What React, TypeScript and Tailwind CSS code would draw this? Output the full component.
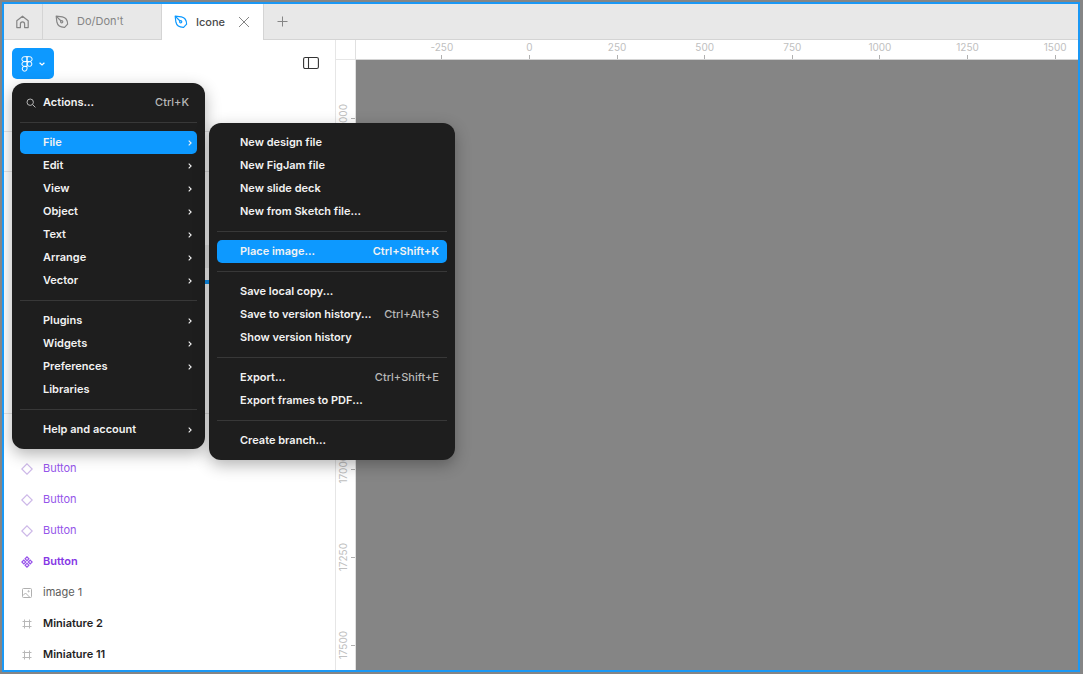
import type { ReactNode } from "react";

type MenuEntry = {
  label: string;
  shortcut?: string;
  submenu?: boolean;
  active?: boolean;
  icon?: ReactNode;
};

type Layer = {
  name: string;
  kind: "instance" | "component" | "image" | "frame";
};

const SearchIcon = () => (
  <svg width="10" height="10" viewBox="0 0 10 10" fill="none" stroke="currentColor" aria-hidden="true">
    <circle cx="4.2" cy="4.2" r="3.2" />
    <path d="M6.6 6.6 9.4 9.4" />
  </svg>
);

const ChevronRight = () => (
  <svg width="4" height="6" viewBox="0 0 4 6" fill="none" stroke="currentColor" strokeWidth="1.1" aria-hidden="true">
    <path d="M.7.7 3.1 3 .7 5.3" />
  </svg>
);

const mainMenu: MenuEntry[][] = [
  [{ label: "Actions...", shortcut: "Ctrl+K", icon: <SearchIcon /> }],
  [
    { label: "File", submenu: true, active: true },
    { label: "Edit", submenu: true },
    { label: "View", submenu: true },
    { label: "Object", submenu: true },
    { label: "Text", submenu: true },
    { label: "Arrange", submenu: true },
    { label: "Vector", submenu: true },
  ],
  [
    { label: "Plugins", submenu: true },
    { label: "Widgets", submenu: true },
    { label: "Preferences", submenu: true },
    { label: "Libraries" },
  ],
  [{ label: "Help and account", submenu: true }],
];

const fileMenu: MenuEntry[][] = [
  [
    { label: "New design file" },
    { label: "New FigJam file" },
    { label: "New slide deck" },
    { label: "New from Sketch file..." },
  ],
  [{ label: "Place image...", shortcut: "Ctrl+Shift+K", active: true }],
  [
    { label: "Save local copy..." },
    { label: "Save to version history...", shortcut: "Ctrl+Alt+S" },
    { label: "Show version history" },
  ],
  [
    { label: "Export...", shortcut: "Ctrl+Shift+E" },
    { label: "Export frames to PDF..." },
  ],
  [{ label: "Create branch..." }],
];

const layers: Layer[] = [
  { name: "Button", kind: "instance" },
  { name: "Button", kind: "instance" },
  { name: "Button", kind: "instance" },
  { name: "Button", kind: "component" },
  { name: "image 1", kind: "image" },
  { name: "Miniature 2", kind: "frame" },
  { name: "Miniature 11", kind: "frame" },
];

const layerText = {
  instance: "text-[#9555ea]",
  component: "text-[#8638e5] font-semibold",
  image: "text-[#5c5c5c]",
  frame: "text-[#1e1e1e] font-semibold",
};

const xMarks = ["-250", "0", "250", "500", "750", "1000", "1250", "1500"];
const yMarks = ["16000", "16250", "16500", "16750", "17000", "17250", "17500"];

const PenIcon = () => (
  <svg width="14" height="14" viewBox="0 0 14 14" fill="none" stroke="currentColor" strokeWidth="1.2" strokeLinejoin="round" aria-hidden="true">
    <path d="M1.2 1.2 7.4 1.8C10.6 2.4 12.6 5 12.6 9.2L9.6 12.3C5.4 12.4 2.6 10.4 1.9 7.2Z" />
    <path d="M1.4 1.4 6 6" />
    <circle cx="6.7" cy="6.7" r="1.1" />
  </svg>
);

const HomeIcon = () => (
  <svg width="13" height="14" viewBox="0 0 13 14" fill="none" stroke="currentColor" strokeWidth="1.2" strokeLinejoin="round" aria-hidden="true">
    <path d="M.8 5.8 6.5 1.2 12.2 5.8V12.6H8.6V9A2.1 2.1 0 0 0 4.4 9V12.6H.8Z" />
  </svg>
);

const FigmaIcon = () => (
  <svg width="12" height="16" viewBox="0 0 12 16" fill="none" stroke="currentColor" strokeWidth="1" aria-hidden="true">
    <path d="M6 .7H3.3a2.4 2.4 0 0 0 0 4.9H6ZM6 .7h2.7a2.4 2.4 0 0 1 0 4.9H6ZM6 5.6H3.3a2.4 2.4 0 0 0 0 4.8H6Z" />
    <circle cx="8.5" cy="8" r="2.4" />
    <path d="M6 10.4H3.3A2.4 2.4 0 1 0 6 12.8Z" />
  </svg>
);

const LayerIcon = ({ kind }: { kind: Layer["kind"] }) => {
  if (kind === "instance") {
    return (
      <svg width="12" height="12" viewBox="0 0 12 12" fill="none" stroke="#cdb8e8" strokeWidth="1.2" aria-hidden="true">
        <path d="M6 .8 11.2 6 6 11.2.8 6Z" />
      </svg>
    );
  }
  if (kind === "component") {
    return (
      <svg width="12" height="12" viewBox="0 0 12 12" fill="none" stroke="#9650ea" strokeWidth="1.2" aria-hidden="true">
        <path d="M6 .9 7.9 2.8 6 4.7 4.1 2.8ZM6 7.3 7.9 9.2 6 11.1 4.1 9.2ZM2.8 4.1 4.7 6 2.8 7.9.9 6ZM9.2 4.1 11.1 6 9.2 7.9 7.3 6Z" />
      </svg>
    );
  }
  if (kind === "image") {
    return (
      <svg width="12" height="12" viewBox="0 0 12 12" fill="none" stroke="#b0b0b0" aria-hidden="true">
        <rect x="1.5" y="1.5" width="9" height="9" rx="1" />
        <path d="M2 8.5 4.5 6 8.8 10.3" />
        <circle cx="7.6" cy="4.3" r=".6" />
      </svg>
    );
  }
  return (
    <svg width="12" height="12" viewBox="0 0 12 12" fill="none" stroke="#b8b8b8" aria-hidden="true">
      <path d="M3.5 1.5V10.5M8.5 1.5V10.5M1.5 3.5H10.5M1.5 8.5H10.5" />
    </svg>
  );
};

type MenuProps = {
  label: string;
  groups: MenuEntry[][];
  className: string;
};

const Menu = ({ label, groups, className }: MenuProps) => (
  <div
    role="menu"
    aria-label={label}
    className={`rounded-xl bg-[#1e1e1e] p-2 text-[11px] font-semibold text-[#f2f2f2] shadow-[0_5px_16px_rgba(0,0,0,0.3)] ${className}`}
  >
    {groups.map((group, i) => (
      <div key={i} role="group" className={i > 0 ? "mt-2 border-t border-[#383838] pt-2" : ""}>
        {group.map((entry) => (
          <button
            key={entry.label}
            type="button"
            role="menuitem"
            className={`flex h-[23px] w-full items-center rounded-[5px] text-left whitespace-nowrap ${
              entry.submenu ? "pr-[5px]" : "pr-2"
            } ${entry.active ? "bg-[#0d99ff]" : ""}`}
          >
            <span className="flex w-[23px] shrink-0 justify-center pr-0.5 text-[#b8b8b8]">{entry.icon}</span>
            <span className="flex-1">{entry.label}</span>
            {entry.shortcut && (
              <span className={entry.active ? "" : "font-medium text-[#b8b8b8]"}>{entry.shortcut}</span>
            )}
            {entry.submenu && <ChevronRight />}
          </button>
        ))}
      </div>
    ))}
  </div>
);

const TabBar = () => (
  <header className="flex h-9 shrink-0 border-b border-[#d4d4d4] bg-[#e8e8e8] text-[11px] text-[#858585]">
    <button type="button" aria-label="Home" className="flex w-[39px] items-center justify-center border-r border-[#d4d4d4] pr-0.5">
      <HomeIcon />
    </button>
    <button type="button" className="flex w-[119px] items-center gap-2 border-r border-[#d4d4d4] pl-3">
      <PenIcon />
      Do/Don't
    </button>
    <div className="-mb-px flex w-[102px] items-center border-r border-[#d4d4d4] bg-white pl-3">
      <button type="button" className="flex flex-1 items-center gap-2 font-medium text-[#4a4a4a]">
        <span className="text-[#0d99ff]">
          <PenIcon />
        </span>
        Icone
      </button>
      <button type="button" aria-label="Close tab" className="mr-[13px]">
        <svg width="12" height="12" viewBox="0 0 12 12" stroke="currentColor" aria-hidden="true">
          <path d="M1 1 11 11M11 1 1 11" />
        </svg>
      </button>
    </div>
    <button type="button" aria-label="New tab" className="flex w-9 items-center justify-center">
      <svg width="11" height="11" viewBox="0 0 11 11" stroke="currentColor" aria-hidden="true">
        <path d="M5.5 .5V10.5M.5 5.5H10.5" />
      </svg>
    </button>
  </header>
);

const Sidebar = () => (
  <aside className="flex w-[332px] shrink-0 flex-col border-r border-[#e6e6e6] bg-white">
    <div className="flex h-[92px] items-start justify-between border-b border-[#e6e6e6] py-2 pr-4 pl-2">
      <div className="relative">
        <button
          type="button"
          aria-label="Main menu"
          className="flex h-[31px] w-[42px] items-center justify-center gap-1.5 rounded-[5px] bg-[#0d99ff] text-white"
        >
          <FigmaIcon />
          <svg width="6" height="4" viewBox="0 0 6 4" fill="none" stroke="currentColor" strokeWidth="1.2" aria-hidden="true">
            <path d="M.6.7 3 3 5.4.7" />
          </svg>
        </button>
        <div className="absolute top-full left-0 z-10 mt-1 flex items-start gap-1">
          <Menu label="Main menu" groups={mainMenu} className="w-[193px]" />
          <Menu label="File" groups={fileMenu} className="mt-10 w-[246px]" />
        </div>
      </div>
      <button type="button" aria-label="Toggle sidebar" className="mt-2 text-[#333333]">
        <svg width="16" height="14" viewBox="0 0 16 14" fill="none" stroke="currentColor" strokeWidth="1.1" aria-hidden="true">
          <rect x=".6" y="1.5" width="14.8" height="11" rx="1.6" />
          <path d="M5.5 1.5V12.5" />
        </svg>
      </button>
    </div>
    <div className="h-10 border-b border-[#e6e6e6]" />
    <div className="flex h-[242px] flex-col border-b border-[#e6e6e6] px-4 pt-[73px]">
      <div className="h-[23px] rounded-[5px] bg-[#f0f0f0]" />
      <div className="mt-3 h-1 bg-[#0d99ff]" />
    </div>
    <ul className="pt-[39px] text-[11px]">
      {layers.map((layer, i) => (
        <li key={i} className={`flex h-[31px] items-center gap-[10px] pl-[17px] ${layerText[layer.kind]}`}>
          <LayerIcon kind={layer.kind} />
          {layer.name}
        </li>
      ))}
    </ul>
  </aside>
);

const Canvas = () => (
  <main className="flex min-w-0 flex-1 text-[10px] leading-3 text-[#c0c0c0]">
    <div className="flex w-5 shrink-0 flex-col overflow-hidden border-r border-[#e0e0e0] bg-white">
      <div className="h-5 shrink-0 border-b border-[#e6e6e6]" />
      <div className="mt-[15px] -mb-[19px] flex flex-1 flex-col">
        {yMarks.map((mark) => (
          <div key={mark} className="flex flex-1 items-center justify-between pl-px">
            <span className="rotate-180 [writing-mode:vertical-rl]">{mark}</span>
            <span className="h-px w-1 bg-[#b0b0b0]" />
          </div>
        ))}
      </div>
    </div>
    <div className="flex min-w-0 flex-1 flex-col">
      <div className="h-5 overflow-hidden border-b border-[#d4d4d4] bg-white">
        <div className="-mr-[21px] ml-[42px] flex h-full">
          {xMarks.map((mark) => (
            <div key={mark} className="flex flex-1 flex-col items-center justify-between pt-px">
              <span>{mark}</span>
              <span className="h-1 w-px bg-[#b0b0b0]" />
            </div>
          ))}
        </div>
      </div>
      <div className="flex-1 bg-[#858585]" />
    </div>
  </main>
);

const App = () => (
  <div className="flex h-screen bg-[#858585] p-0.5 pr-[3px] font-['Inter',sans-serif]">
    <div className="flex min-w-0 flex-1 flex-col overflow-hidden border-2 border-[#1a98f5]">
      <TabBar />
      <div className="flex min-h-0 flex-1">
        <Sidebar />
        <Canvas />
      </div>
    </div>
  </div>
);

export default App;
